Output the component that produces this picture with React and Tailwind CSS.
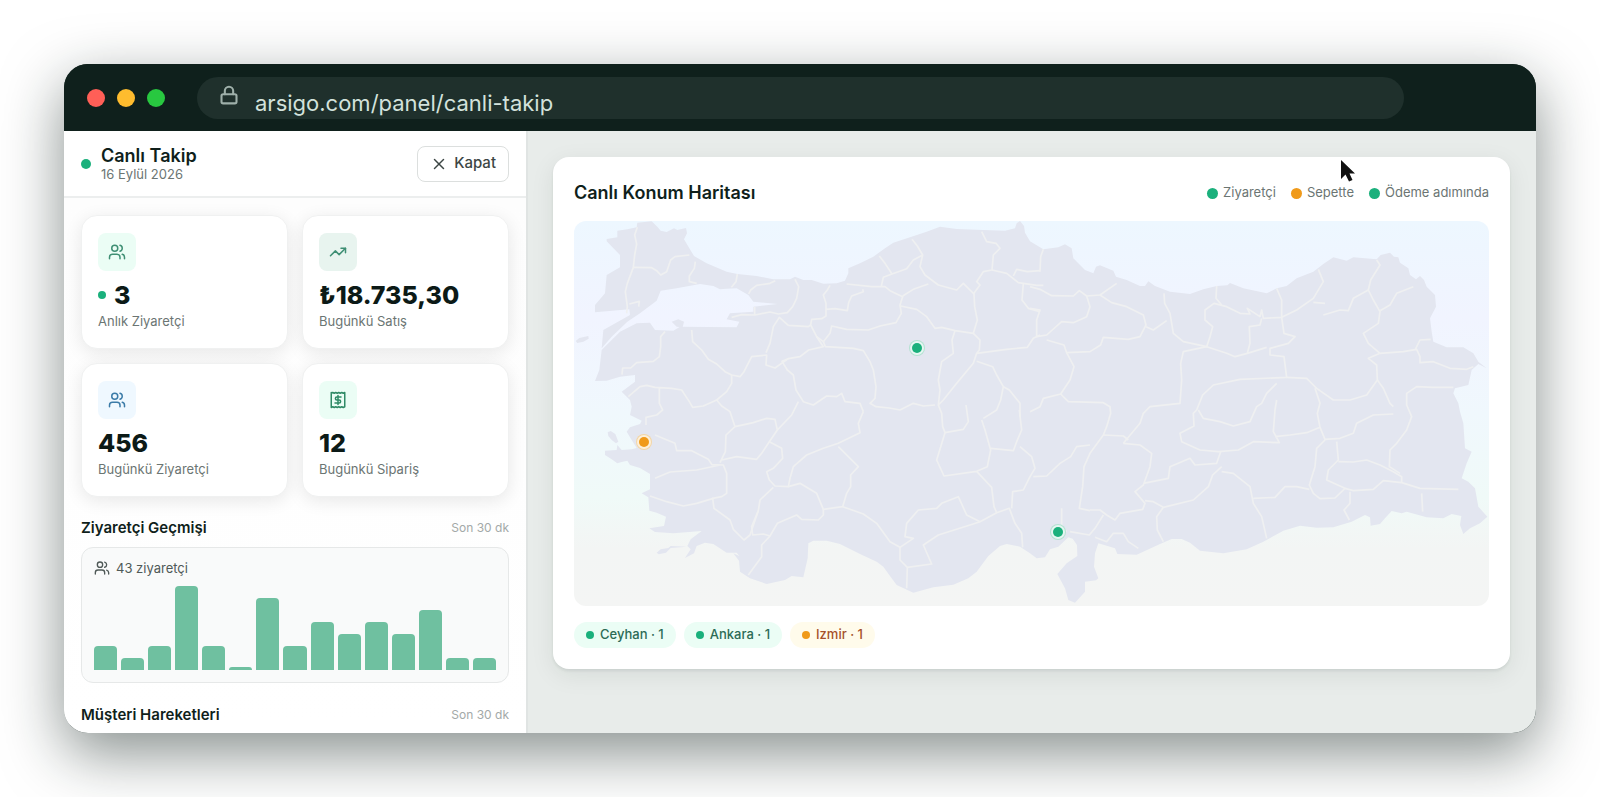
import { Lock, Users, TrendingUp, X } from 'lucide-react'

const STATS = [
  { icon: Users, value: '3', label: 'Anlık Ziyaretçi', tile: 'bg-[#ebfdf5] text-[#3f8f74]', live: true },
  { icon: TrendingUp, value: '₺18.735,30', label: 'Bugünkü Satış', tile: 'bg-[#e8f4ef] text-[#3f8f74]' },
  { icon: Users, value: '456', label: 'Bugünkü Ziyaretçi', tile: 'bg-[#eff8ff] text-[#3b7ba8]' },
  { icon: ReceiptIcon, value: '12', label: 'Bugünkü Sipariş', tile: 'bg-[#ebfdf5] text-[#2f8a66]' },
]

// visitors per two minutes
const HISTORY = [2, 1, 2, 7, 2, 0, 6, 2, 4, 3, 4, 3, 5, 1, 1]
const PEAK = Math.max(...HISTORY)

const LEGEND = [
  { label: 'Ziyaretçi', dot: 'bg-[#1bb07c]' },
  { label: 'Sepette', dot: 'bg-[#f09a1a]' },
  { label: 'Ödeme adımında', dot: 'bg-[#1bb07c]' },
]

const CITIES = [
  { label: 'Ceyhan · 1', dot: 'bg-[#1bb07c]', pill: 'bg-[#ebfdf5] text-[#2c6b55]' },
  { label: 'Ankara · 1', dot: 'bg-[#1bb07c]', pill: 'bg-[#ebfdf5] text-[#2c6b55]' },
  { label: 'Izmir · 1', dot: 'bg-[#f09a1a]', pill: 'bg-[#fffbeb] text-[#a5502a]' },
]

const LAND =
  'M200 297 232 292 232 272 262 268 290 262 292 248 335 244 352 260 362 272 380 276 402 265 412 270 438 264 441 280 432 298 448 325 462 348 500 370 560 395 592 402 650 408 700 418 750 418 765 410 790 420 815 420 850 431 890 430 915 422 925 400 925 385 960 370 1000 350 1035 325 1060 308 1110 292 1160 275 1200 260 1250 267 1330 270 1395 272 1425 265 1430 250 1440 243 1452 258 1455 278 1470 304 1510 328 1555 322 1575 313 1595 325 1600 355 1635 390 1660 400 1668 380 1680 376 1720 392 1728 410 1760 420 1800 438 1815 438 1825 424 1845 438 1890 455 1950 462 1990 448 2030 438 2062 436 2070 429 2110 445 2180 460 2210 445 2240 438 2270 415 2320 395 2350 372 2380 352 2420 362 2440 352 2510 358 2522 345 2550 338 2562 350 2575 352 2580 368 2605 385 2610 405 2628 418 2640 408 2652 420 2660 440 2685 465 2688 500 2670 535 2675 575 2680 605 2720 622 2770 622 2800 640 2815 665 2840 685 2815 672 2795 690 2785 735 2745 745 2740 760 2755 790 2760 815 2770 850 2775 925 2795 935 2780 970 2765 1015 2785 1025 2805 1045 2815 1100 2842 1130 2820 1150 2790 1165 2770 1182 2760 1155 2764 1128 2735 1122 2710 1135 2660 1132 2600 1115 2585 1120 2555 1113 2535 1135 2520 1152 2492 1157 2490 1132 2475 1125 2435 1145 2380 1162 2330 1163 2280 1157 2230 1172 2170 1205 2120 1228 2050 1240 1980 1232 1950 1208 1925 1197 1895 1197 1860 1212 1790 1244 1732 1242 1725 1225 1675 1210 1665 1240 1662 1280 1675 1315 1668 1321 1635 1325 1635 1355 1605 1388 1585 1380 1575 1345 1552 1302 1580 1270 1612 1248 1611 1215 1598 1196 1585 1192 1555 1220 1530 1228 1515 1252 1490 1255 1470 1240 1440 1220 1400 1212 1380 1218 1345 1248 1310 1295 1285 1315 1240 1334 1180 1342 1120 1358 1070 1335 1050 1308 1030 1280 1010 1265 960 1242 900 1212 860 1202 820 1202 805 1210 803 1255 790 1312 755 1308 735 1320 680 1332 630 1315 600 1295 597 1262 580 1240 598 1248 590 1238 560 1238 520 1212 495 1208 470 1218 462 1240 435 1254 452 1228 442 1218 452 1198 485 1173 400 1180 345 1176 328 1165 372 1158 378 1130 350 1118 328 1112 325 1072 305 1060 330 1048 330 1002 300 984 270 975 262 962 245 966 232 970 215 958 195 945 195 932 230 930 232 915 245 930 275 928 290 924 275 900 260 875 270 862 300 852 305 842 270 825 275 800 270 780 245 755 285 725 285 705 240 710 200 722 165 723 178 690 185 630 240 575 290 550 330 548 345 570 400 572 420 560 590 562 598 545 560 538 570 520 640 515 640 500 712 492 640 485 625 465 590 445 560 446 540 448 520 438 480 432 410 445 362 452 350 482 300 520 262 545 215 590 185 625 190 570 270 525 268 508 165 517 165 495 195 460 200 405 240 382 240 345 200 304Z'

// islands off the Aegean coast
const ISLANDS = [
  'M107 603 118 594 145 588 146 596 130 605 112 609Z',
  'M203 877 212 873 226 882 235 905 228 910 215 900 205 888Z',
  'M350 1238 362 1228 385 1224 392 1218 440 1220 392 1224 378 1238 356 1243Z',
  'M395 545 415 538 432 545 428 562 410 560Z',
]

const BORDERS = [
  // west
  'M292 262 284 285 290 312 284 345 280 382 262 430 256 455 262 500 260 520',
  'M280 382 335 383 350 392 362 405 380 395 392 360 405 350 448 345',
  'M466 365 463 385 448 408 448 425 470 430M592 402 588 425 574 442',
  'M268 492 298 484 296 500',
  'M706 422 690 430 650 436 632 450 626 462M765 418 776 440 770 475 758 500 742 518 715 522 690 516 645 525 605 524 575 532M644 500 644 525',
  'M870 436 862 450 850 465 858 490 858 528 845 536 815 538 812 555 830 590 850 605 M858 508 885 506 922 512 926 488 935 468 970 455 968 448',
  'M745 556 718 532 700 560 690 610 678 638M745 556 805 560 812 555M850 605 870 580 875 558 920 568 985 570 1020 558 1068 548 1084 520 1080 495 1088 470 1050 452 1035 440 995 440 920 432',
  'M375 575 362 590 362 620 358 650 340 664 290 668 272 684 248 684 246 704',
  'M455 570 458 605 485 630 505 658 530 672 555 695 575 705 600 710 612 695 635 650 680 645 678 675 705 684 745 656 780 650 806 630 850 620 830 590',
  'M575 705 575 730 560 755 530 780 545 798 570 815 585 860',
  'M265 770 300 740 320 736 345 742 395 745 425 750 448 785 458 802 490 798 530 780M358 742 358 790 368 810 350 825 318 832 318 855',
  'M850 605 856 620 940 625 970 632 990 665 1000 690 1008 740 1005 775 990 790 1008 800 1048 804 1080 810 1120 790 1150 798 1185 795',
  'M745 656 726 664 742 690 760 705 768 750 790 785 820 795 860 768 890 770 905 760 915 785 960 790 970 815',
  // north west
  'M1018 348 1035 370 1056 402 1030 412 1024 438M1056 402 1100 386 1120 360 1148 345 1132 318 1116 298M1148 345 1140 380 1155 405 1195 435 1250 450 1270 430 1302 462 1304 500 1312 540 1300 580 1245 572 1205 562 1185 565 1160 530 1130 508 1082 498',
  'M1088 468 1120 448 1165 432M1325 275 1340 305 1368 310 1380 325 1360 345 1356 390 1330 395 1310 425 1320 435 1300 462',
  'M1356 390 1400 400 1435 428 1490 436 1510 436M1420 408 1430 388 1462 395 1500 392',
  'M1450 430 1446 480 1465 505 1500 515M1245 572 1236 600 1240 640 1205 665 1195 720 1200 750 1195 795 1210 780 1250 730 1300 670 1310 640 1400 628 1462 622 1480 595 1500 585M1300 580 1320 600 1318 630 1310 640',
  'M1310 664 1358 680 1370 705 1390 740 1408 750 1440 790 1440 830M1390 740 1382 780 1370 810 1330 835',
  // south west
  'M585 860 640 848 680 835 705 838 712 870 755 825 775 785M585 860 558 885 556 935 540 968M712 870 688 905 665 940 650 958 590 950 545 960',
  'M688 905 725 925 728 955 700 985 680 995 688 1020 705 1038 745 1040 750 1015 760 980 800 945 850 925 895 910 960 878 955 850 970 815',
  'M345 885 405 910 410 932 455 932 505 958 516 974 550 975 560 1000 560 1060 545 1070 518 1075 522 1105 570 1140 580 1168 612 1200 630 1185 655 1112 660 1080 700 1042M540 975 470 990 390 996 345 1015',
  'M330 1068 380 1085 430 1098 470 1090 520 1075M655 1112 635 1160 638 1185 670 1182 690 1188 712 1150 770 1125 785 1138 835 1140 850 1125 850 1108 908 1100 920 1060 932 1040 932 1005 955 980 895 920',
  'M745 1040 780 1030 830 1060 850 1108M690 1188 665 1215 665 1250 625 1305',
  'M908 1100 970 1122 1010 1150 1050 1205 1080 1222 1120 1195 1095 1190 1100 1150 1135 1110 1190 1105 1205 1090 1255 1070 1280 1125 1320 1145 1370 1118 1408 1105 1425 1150 1445 1180 1448 1222',
  'M1080 1222 1080 1260 1102 1282 1100 1345M1102 1282 1175 1272 1150 1215 1195 1185 1290 1155 1320 1145',
  // centre
  'M1195 795 1205 820 1208 860 1215 878 1190 960 1212 1008 1310 994 1342 980 1352 930 1335 870 1325 840M1215 878 1270 868 1285 845 1278 795M1310 994 1355 1042 1362 1100 1370 1118',
  'M1352 925 1420 932 1430 905 1445 870 1438 810M1440 920 1475 950 1485 985 1470 1010 1450 1050 1418 1055 1415 1105',
  'M1470 440 1500 448 1535 467 1600 468 1618 452 1640 468 1680 465 1730 430M1500 395 1502 350 1510 328M1640 468 1650 500 1640 530 1600 548 1565 545 1520 585 1490 590 1490 540 1500 510 1470 505',
  'M1680 465 1715 488 1760 500 1810 525 1818 555 1800 590 1765 598 1690 592 1682 615 1650 635 1580 638 1572 615 1520 600',
  'M1580 638 1602 680 1590 720 1562 762 1510 775 1500 800 1470 815M1562 762 1585 785 1690 788 1710 800 1712 820 1700 860 1690 885 1650 940 1632 980 1628 1040 1618 1105 1650 1112',
  'M1480 1010 1520 1008 1560 970 1592 950 1610 920 1650 915',
  // north east
  'M1872 460 1874 490 1890 520 1900 580 1930 605 2000 620 2010 590 2018 560 1995 540 1995 510 2022 490 2060 500 2100 520 2130 522 2122 505 2160 530 2165 510 2170 535 2225 532 2225 480 2210 445',
  'M2030 438 2028 475 2045 495M1818 560 1840 570 1880 542M2225 532 2232 580 2265 590 2245 610 2190 625 2190 645 2232 650 2240 712 2100 718 2020 735 1988 765 1970 810',
  'M2000 620 2060 640 2085 650 2122 640 2130 610 2128 560 2160 555 2165 535M2122 640 2180 622M2000 620 1930 635 1922 670 1925 720 1920 790 1830 800 1810 820 1800 850 1750 910',
  'M2335 388 2350 425 2320 475 2270 510 2225 532M2320 487 2355 490M2350 525 2400 510 2425 512 2440 475 2485 450 2492 420 2520 375 2510 360M2485 450 2500 480 2520 515 2515 550 2470 580 2485 610 2520 640 2590 635 2630 628 2640 650 2640 668 2680 665 2730 685 2780 688 2800 680',
  'M2520 512 2550 495 2570 460 2620 440M2625 630 2640 600 2672 598M2520 640 2485 655 2510 675 2512 720 2480 765 2430 780 2380 780 2330 745 2300 715 2240 712',
  'M2512 720 2530 745 2550 790 2560 800M2740 742 2680 742 2630 740 2600 760 2600 795 2615 830 2600 870 2570 910 2550 930 2548 980 2580 1000',
  // east
  'M1690 885 1750 888 1765 900M1970 810 1960 820 1962 858 1920 880 1925 905 1980 930 2035 935 2095 930 2140 905 2218 908 2200 875 2205 810 2210 780M1975 810 1990 835 2040 845 2080 858 2130 845 2150 800 2165 790 2180 760 2210 730M2205 890 2250 885 2300 878 2340 862 2332 820 2340 790 2325 745',
  'M2340 862 2355 898 2400 895 2440 880 2450 850 2500 825 2560 822M2355 900 2330 925 2325 980 2308 1035 2320 1060 2340 1076 2385 1074 2415 1045 2360 1020 2365 990 2395 960 2390 905',
  'M2395 965 2440 966 2480 960 2520 975 2560 995 2585 1010 2585 1028 2640 1045 2755 1048M2415 1045 2440 1052 2500 1048 2530 1022 2585 1028M2645 1060 2648 1115M2430 1055 2430 1090 2412 1110 2428 1140',
  'M1750 910 1800 915 1835 940 1830 980 1810 1035 1785 1055 1815 1090 1808 1108 1740 1120 1725 1140 1700 1125 1680 1110 1650 1110M1810 1030 1885 1015 1890 980 1950 955 1965 975 2030 970 2042 935',
  'M2045 980 2018 1005 2005 1040 1960 1080 1870 1102 1840 1085 1815 1082M2045 995 2080 1000 2130 1040 2140 1090 2165 1130 2180 1195M2140 1075 2205 1072 2235 1040 2270 1040 2308 1048',
  'M1870 1102 1850 1130 1852 1170 1870 1205M1690 1125 1665 1165 1648 1185 1590 1175M1565 1105 1565 1160 1580 1175M1665 1192 1700 1205 1720 1180 1750 1180 1765 1205 1795 1225',
]

// percent of the map area
const PINS = [
  { city: 'Ankara', spot: 'left-[37.5%] top-[33%]', look: 'bg-[#1bb07c] shadow-[0_0_0_2px_#e6f6f2,0_0_0_3px_#b4e2d2]' },
  { city: 'Izmir', spot: 'left-[7.6%] top-[57.3%]', look: 'bg-[#f09a1a] shadow-[0_0_0_2px_#fdf0da,0_0_0_3px_#f3d6a5]' },
  { city: 'Ceyhan', spot: 'left-[52.9%] top-[80.7%]', look: 'bg-[#1bb07c] shadow-[0_0_0_2px_#e6f6f2,0_0_0_3px_#b4e2d2]' },
]

function ReceiptIcon({ className }) {
  return (
    <svg viewBox="0 0 24 24" className={className} fill="none" stroke="currentColor" strokeWidth="2" strokeLinecap="round" strokeLinejoin="round">
      <path d="M3 2v20l2-1 2 1 2-1 2 1 2-1 2 1 2-1 2 1 2-1V2l-2 1-2-1-2 1-2-1-2 1-2-1-2 1-2-1-2 1z" />
      <path d="M16 8h-5.500a2 2 0 0 0 0 4h3a2 2 0 0 1 0 4H8M12 6v12" />
    </svg>
  )
}

function BrowserBar() {
  return (
    <header className="flex h-[67px] shrink-0 items-center bg-[#0f201c] pl-[23px] pr-[132px]">
      <div className="flex gap-3">
        <span className="size-[18px] rounded-full bg-[#ff5f57]" />
        <span className="size-[18px] rounded-full bg-[#febc2e]" />
        <span className="size-[18px] rounded-full bg-[#28c840]" />
      </div>
      <div className="ml-8 flex h-[42px] flex-1 items-center rounded-full bg-[#1f302c] pl-[22px]">
        <Lock className="mb-1.5 size-5 text-[#9fb0aa]" strokeWidth={2.5} />
        <input
          aria-label="Adres"
          readOnly
          value="arsigo.com/panel/canli-takip"
          className="ml-4 mt-2.5 min-w-0 flex-1 bg-transparent text-[22px] leading-7 text-[#d3e2dc] outline-none"
        />
      </div>
    </header>
  )
}

function StatCard({ icon: Icon, value, label, tile, live }) {
  return (
    <div className="flex h-[134px] flex-col rounded-2xl border border-[#f0f1f1] bg-white px-4 pt-[17px] shadow-[0_4px_18px_rgba(0,0,0,0.09)]">
      <span className={`flex size-[38px] shrink-0 items-center justify-center rounded-lg ${tile}`}>
        <Icon className="size-[18px]" strokeWidth={2} />
      </span>
      <p className="mt-2 flex items-center gap-2 text-[25px] font-extrabold leading-8 text-[#0c1a17]">
        {live && <span className="size-2 rounded-full bg-[#1bb07c]" />}
        {value}
      </p>
      <p className="text-[13px] leading-5 text-[#6b7573]">{label}</p>
    </div>
  )
}

function SectionTitle({ children }) {
  return (
    <div className="flex items-center justify-between">
      <h2 className="text-[15px] font-semibold leading-5 text-[#0f1f1b]">{children}</h2>
      <span className="text-xs text-[#a3a9a8]">Son 30 dk</span>
    </div>
  )
}

function Sidebar() {
  return (
    <aside className="flex w-[464px] shrink-0 flex-col overflow-hidden border-r-2 border-[#e0e4e3] bg-white">
      <div className="flex h-[67px] shrink-0 items-center border-b-2 border-[#eceeee] px-[17px]">
        <span className="size-[10px] rounded-full bg-[#1bb07c]" />
        <div className="ml-[10px]">
          <h1 className="text-lg font-semibold leading-5 text-[#0f1f1b]">Canlı Takip</h1>
          <p className="text-[13px] leading-4 text-[#6b7573]">16 Eylül 2026</p>
        </div>
        <button className="ml-auto flex h-9 items-center gap-1.5 rounded-lg border border-[#dcdfde] bg-white px-3 text-[15px] font-medium text-[#3c4644]">
          <X className="size-[18px]" strokeWidth={2} />
          Kapat
        </button>
      </div>

      <div className="bg-linear-to-b from-[#fdfdfd] to-white px-[17px] pt-[17px]">
        <div className="grid grid-cols-2 gap-[14px]">
          {STATS.map((stat) => (
            <StatCard key={stat.label} {...stat} />
          ))}
        </div>

        <section className="mt-[21px]">
          <SectionTitle>Ziyaretçi Geçmişi</SectionTitle>
          <div className="mt-[9px] rounded-xl border border-[#e6e8e8] bg-[#f9fafa] px-3 pb-3 pt-[10px]">
            <p className="flex items-center gap-1.5 text-[13px] leading-5 text-[#4f5957]">
              <Users className="size-4" strokeWidth={2} />
              43 ziyaretçi
            </p>
            <div className="mt-2 flex h-[84px] items-end gap-1">
              {HISTORY.map((count, i) => (
                <div
                  key={i}
                  className="min-h-[3px] flex-1 rounded-t bg-[#6fc0a0]"
                  style={{ height: `${(count / PEAK) * 100}%` }}
                />
              ))}
            </div>
          </div>
        </section>

        <section className="mt-[22px]">
          <SectionTitle>Müşteri Hareketleri</SectionTitle>
        </section>
      </div>
    </aside>
  )
}

function TurkeyMap() {
  return (
    <div className="relative mt-4 aspect-[915/385] overflow-hidden rounded-xl bg-[linear-gradient(180deg,#edf7ff_0%,#f1f4ff_25%,#f0f8fd_50%,#f0faf8_72%,#f3f5f4_85%,#f4f5f4_100%)]">
      <svg viewBox="102 243 2745 1155" className="block size-full">
        <g fill="#e3e6f0">
          <path d={LAND} />
          {ISLANDS.map((d) => (
            <path key={d} d={d} />
          ))}
        </g>
        <g fill="none" stroke="#eff0f1" strokeWidth="5" strokeLinejoin="round">
          {BORDERS.map((d) => (
            <path key={d} d={d} />
          ))}
        </g>
      </svg>
      {PINS.map((pin) => (
        <span
          key={pin.city}
          title={pin.city}
          className={`absolute size-[10px] -translate-x-1/2 -translate-y-1/2 rounded-full ${pin.spot} ${pin.look}`}
        />
      ))}
    </div>
  )
}

function MapCard() {
  return (
    <section className="relative rounded-2xl bg-white px-[21px] pb-[21px] pt-6 shadow-[0_2px_3px_rgba(15,32,28,0.08),0_6px_24px_rgba(15,32,28,0.08)]">
      <div className="flex items-center justify-between">
        <h2 className="text-lg font-semibold leading-6 text-[#0f1f1b]">Canlı Konum Haritası</h2>
        <ul className="flex gap-[15px]">
          {LEGEND.map((item) => (
            <li key={item.label} className="flex items-center gap-[5px] text-[13px] text-[#6b7573]">
              <span className={`size-[11px] rounded-full ${item.dot}`} />
              {item.label}
            </li>
          ))}
        </ul>
      </div>
      <TurkeyMap />
      <ul className="mt-4 flex gap-2">
        {CITIES.map((city) => (
          <li key={city.label} className={`flex h-[26px] items-center gap-1.5 rounded-full px-3 text-[13px] font-medium ${city.pill}`}>
            <span className={`size-2 rounded-full ${city.dot}`} />
            {city.label}
          </li>
        ))}
      </ul>
      <Cursor />
    </section>
  )
}

function Cursor() {
  return (
    <svg viewBox="0 0 16 23" className="absolute right-[154px] top-[2px] h-[23px] w-4" fill="#111">
      <path d="M1 1v19l4.500-4.500 3.500 7 3.500-1.500-3-6.500H15z" />
    </svg>
  )
}

export default function App() {
  return (
    <div className="flex h-screen min-h-[600px] bg-white p-16 font-['Inter','Liberation_Sans',sans-serif]">
      <div className="flex min-w-0 flex-1 flex-col overflow-hidden rounded-3xl bg-[#0f201c] shadow-[0_20px_60px_rgba(15,32,28,0.5)]">
        <BrowserBar />
        <div className="flex min-h-0 flex-1">
          <Sidebar />
          <main className="min-w-0 flex-1 bg-[#e8ecea] py-[26px] pl-[25px] pr-[26px]">
            <MapCard />
          </main>
        </div>
      </div>
    </div>
  )
}
